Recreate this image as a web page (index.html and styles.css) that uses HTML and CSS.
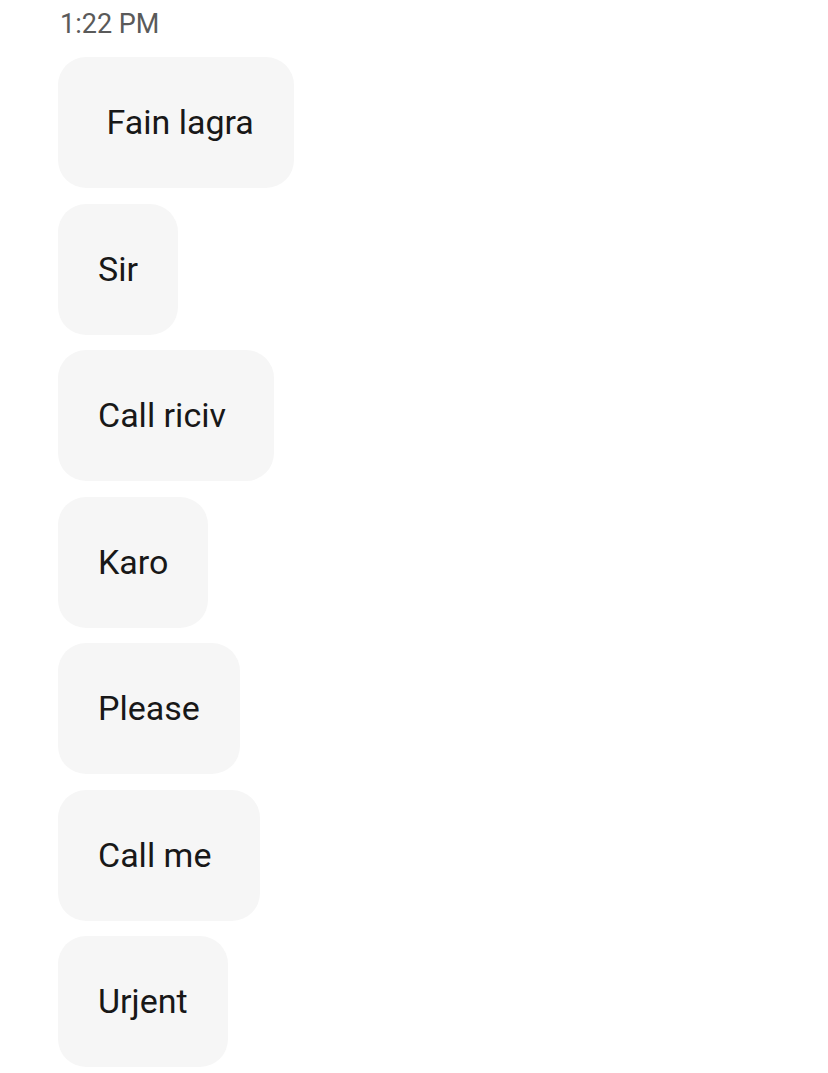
FILE: index.html
```html
<html>
    <head>
        <link rel="stylesheet" href="styles.css">
    </head>
    <body>
        <div class="chat">
            <div class="time">1:22 PM</div>
            <div class="messages">
                <div class="bubble">&nbsp;Fain lagra</div>
                <div class="bubble">Sir</div>
                <div class="bubble">Call riciv&nbsp;</div>
                <div class="bubble">Karo</div>
                <div class="bubble">Please</div>
                <div class="bubble">Call me&nbsp;</div>
                <div class="bubble">Urjent</div>
            </div>
        </div>
    </body>
</html>
```

FILE: styles.css
```css
body {
    margin: 0;
    background-color: #fff;
}
* {
    box-sizing: border-box;
    font-family: Roboto, "Noto Sans", sans-serif;
}
.chat {
    padding: 6px 0 0 58px;
}
.time {
    font-size: 27px;
    line-height: 36px;
    color: #5a5a5a;
    padding-left: 2px;
}
.messages {
    display: flex;
    flex-direction: column;
    align-items: flex-start;
    gap: 15.5px;
    margin-top: 15px;
}
.bubble {
    background-color: #f6f6f6;
    border-radius: 28px;
    padding: 45px 40px;
    font-size: 34px;
    line-height: 41px;
    color: #181818;
    white-space: pre;
}
```
